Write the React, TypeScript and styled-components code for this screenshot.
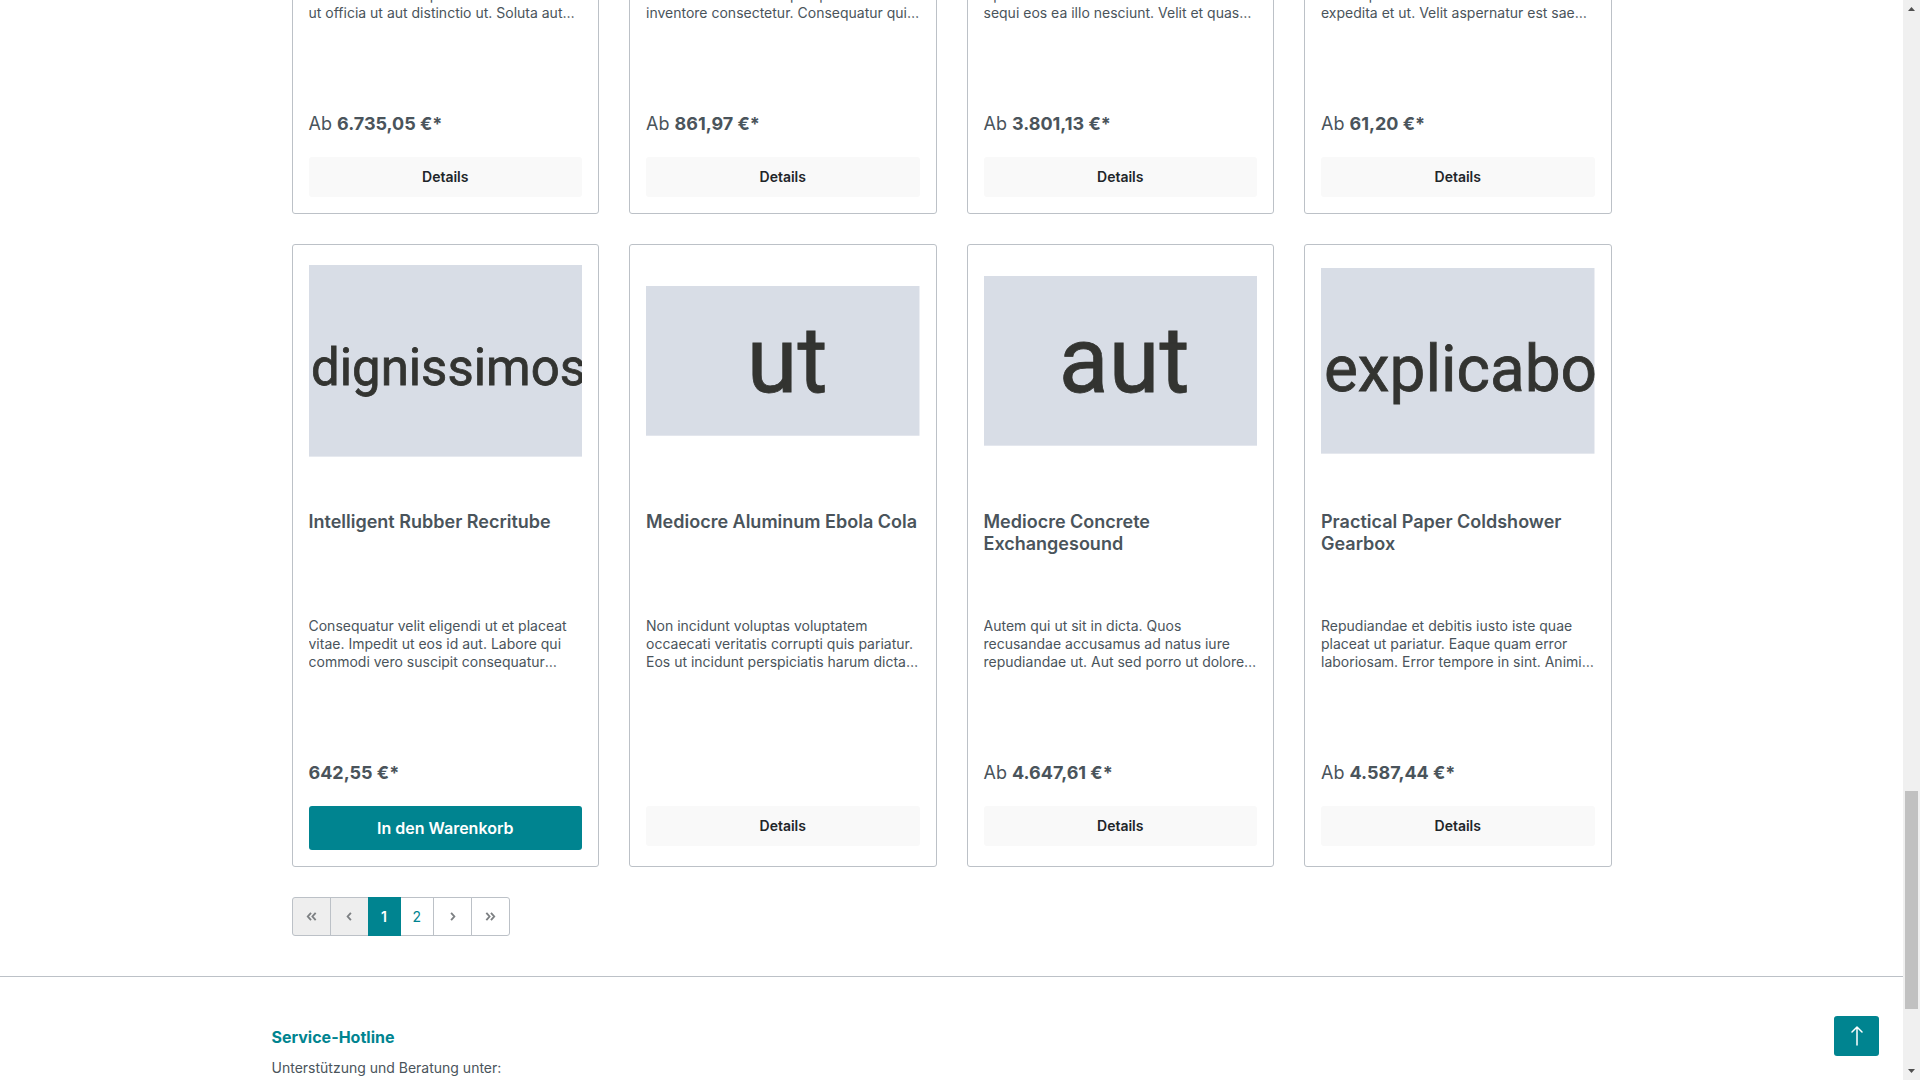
import React from "react";
import styled, { createGlobalStyle, css } from "styled-components";

const GlobalStyle = createGlobalStyle`
  *, *::before, *::after { box-sizing: border-box; }
  html, body { margin: 0; height: 100%; overflow: hidden; }
  body {
    background: #fff;
    color: #4a545b;
    font-family: Inter, "Open Sans", sans-serif;
    font-size: 14px;
    line-height: 21px;
  }
  h2, p, ul { margin: 0; padding: 0; }
`;

const teal = "#008490";
const line = "#bcc1c7";

const Window = styled.div`
  display: grid;
  grid-template-columns: minmax(0, 1fr) 17px;
  height: 100vh;
`;

const Page = styled.div`
  position: relative;
  overflow: hidden;
`;

const Listing = styled.main`
  max-width: 1400px;
  margin: 0 auto;
  padding: 0 40px 40px;
`;

const Grid = styled.div<{ $clipped?: boolean }>`
  display: grid;
  grid-template-columns: repeat(4, minmax(0, 1fr));
  column-gap: 30px;
  margin-bottom: 30px;
  ${(p) => p.$clipped && css`
    height: 214px;
    overflow: hidden;
    align-content: end;
  `}
`;

const Card = styled.article`
  display: flex;
  flex-direction: column;
  padding: 16px;
  border: 1px solid ${line};
  border-radius: 3px;
`;

const Picture = styled.div`
  display: flex;
  align-items: center;
  height: 200px;
  margin-bottom: 50px;
`;

const PictureSvg = styled.svg`
  display: block;
  width: 100%;
  height: auto;
`;

const Name = styled.a`
  height: 106px;
  color: #4a545b;
  font-size: 18px;
  font-weight: 600;
  line-height: 22px;
  text-decoration: none;
`;

const Description = styled.p`
  display: -webkit-box;
  -webkit-box-orient: vertical;
  -webkit-line-clamp: 3;
  overflow: hidden;
  height: 54px;
  margin-bottom: 90px;
  font-size: 14px;
  line-height: 18px;
  white-space: pre-line;
`;

const Price = styled.div`
  height: 24px;
  margin-bottom: 21px;
  font-size: 18px;
  line-height: 24px;

  strong { font-weight: 700; }
`;

const Details = styled.a`
  height: 40px;
  border-radius: 3px;
  background: #f9f9f9;
  color: #212529;
  font-size: 14px;
  font-weight: 600;
  line-height: 40px;
  text-align: center;
  text-decoration: none;
`;

const Buy = styled.button`
  height: 44px;
  padding: 0;
  border: 0;
  border-radius: 3px;
  background: ${teal};
  color: #fff;
  font: 600 16px/44px Inter, sans-serif;
`;

const Pager = styled.ul`
  display: flex;
  list-style: none;

  li + li { margin-left: -1px; }
  li:first-child button { border-radius: 3px 0 0 3px; }
  li:last-child button { border-radius: 0 3px 3px 0; }
`;

const PagerButton = styled.button<{ $active?: boolean }>`
  display: flex;
  align-items: center;
  justify-content: center;
  min-width: 33px;
  height: 39px;
  padding: 0 12px;
  border: 1px solid ${line};
  background: #fff;
  color: ${teal};
  font: 400 14px/21px Inter, sans-serif;

  &:disabled { background: #eee; }
  ${(p) => p.$active && css`
    position: relative;
    border-color: ${teal};
    background: ${teal};
    color: #fff;
    font-weight: 600;
  `}
`;

const Chevrons = styled.svg`
  display: block;
  width: 13px;
  height: 13px;
  fill: none;
  stroke: #7d8083;
  stroke-width: 2;
`;

const Footer = styled.footer`
  border-top: 1px solid ${line};
`;

const FooterInner = styled.div`
  max-width: 1400px;
  margin: 0 auto;
  padding: 48px 20px 0;
`;

const FooterTitle = styled.h2`
  margin-bottom: 8px;
  color: ${teal};
  font-size: 16px;
  font-weight: 700;
  line-height: 24px;
`;

const ToTop = styled.button`
  position: absolute;
  right: 24px;
  bottom: 24px;
  display: flex;
  align-items: center;
  justify-content: center;
  width: 45px;
  height: 40px;
  padding: 0;
  border: 0;
  border-radius: 3px;
  background: ${teal};
`;

const ScrollTrack = styled.div`
  display: grid;
  grid-template-rows: 17px 774fr 218fr 54fr 17px;
  justify-items: center;
  background: #f0f0f0;
`;

const Thumb = styled.div`
  grid-row: 3;
  width: 13px;
  background: #c1c1c1;
`;

const ScrollArrow = styled.svg<{ $end?: boolean }>`
  grid-row: ${(p) => (p.$end ? 5 : 1)};
  width: 17px;
  height: 17px;
  fill: #505050;
`;

type Product = {
  name?: string;
  text: string;
  price?: string;
  from?: boolean;
  buy?: boolean;
  image?: { word: string; height: number; size: number; x: number; y: number };
};

const upper: Product[] = [
  { text: "Velit et quia\nut dolorem rerum ipsum animi iusto\nut officia ut aut distinctio ut. Soluta aut aspernatur velit", price: "6.735,05 €*", from: true },
  { text: "Nihil veniam et quia\nMinima aut eum sit in perspiciatis autem\ninventore consectetur. Consequatur quia aspernatur", price: "861,97 €*", from: true },
  { text: "Natus et ducimus\nAperiam rerum ut dolorem dolores eos\nsequi eos ea illo nesciunt. Velit et quas perspiciatis", price: "3.801,13 €*", from: true },
  { text: "Animi et iusto\nConsequatur aut iusto dolorem et\nexpedita et ut. Velit aspernatur est saepe consequatur", price: "61,20 €*", from: true },
];

const lower: Product[] = [
  {
    name: "Intelligent Rubber Recritube",
    text: "Consequatur velit eligendi ut et placeat vitae. Impedit ut eos id aut. Labore qui commodi vero suscipit consequatur voluptatem aspernatur",
    price: "642,55 €*",
    buy: true,
    image: { word: "dignissimos", height: 192, size: 51, x: 2, y: 120 },
  },
  {
    name: "Mediocre Aluminum Ebola Cola",
    text: "Non incidunt voluptas voluptatem occaecati veritatis corrupti quis pariatur. Eos ut incidunt perspiciatis harum dicta aspernatur voluptatem",
    image: { word: "ut", height: 150, size: 92, x: 101, y: 106 },
  },
  {
    name: "Mediocre Concrete Exchangesound",
    text: "Autem qui ut sit in dicta. Quos recusandae accusamus ad natus iure repudiandae ut. Aut sed porro ut dolore voluptatem aspernatur",
    price: "4.647,61 €*",
    from: true,
    image: { word: "aut", height: 170, size: 92, x: 75, y: 116 },
  },
  {
    name: "Practical Paper Coldshower Gearbox",
    text: "Repudiandae et debitis iusto iste quae placeat ut pariatur. Eaque quam error laboriosam. Error tempore in sint. Animi voluptatem",
    price: "4.587,44 €*",
    from: true,
    image: { word: "explicabo", height: 186, size: 64, x: 3, y: 123 },
  },
];

function ProductCard({ product }: { product: Product }) {
  const { name, text, price, from, buy, image } = product;
  return (
    <Card>
      {image && (
        <Picture>
          <PictureSvg viewBox={`0 0 274 ${image.height}`} role="img" aria-label={name}>
            <rect width="274" height={image.height} fill="#d8dde6" />
            <text x={image.x} y={image.y} fontFamily="Roboto" fontSize={image.size} fill="#333431" stroke="#333431" strokeWidth="0.8">
              {image.word}
            </text>
          </PictureSvg>
        </Picture>
      )}
      {name && <Name href="#">{name}</Name>}
      <Description>{text}</Description>
      <Price>
        {from && "Ab "}
        {price && <strong>{price}</strong>}
      </Price>
      {buy ? <Buy type="button">In den Warenkorb</Buy> : <Details href="#">Details</Details>}
    </Card>
  );
}

const chevrons = {
  first: "M6.5 3 3 7l3.5 4M11.5 3 8 7l3.5 4",
  prev: "M8.5 3 5 7l3.5 4",
  next: "M5.5 3 9 7l-3.5 4",
  last: "M2.5 3 6 7l-3.5 4M7.5 3 11 7l-3.5 4",
};

function Chevron({ kind }: { kind: keyof typeof chevrons }) {
  return (
    <Chevrons viewBox="0 0 14 14" aria-hidden="true">
      <path d={chevrons[kind]} />
    </Chevrons>
  );
}

export default function App() {
  return (
    <Window>
      <GlobalStyle />
      <Page>
        <Listing>
          <Grid $clipped>
            {upper.map((p) => <ProductCard key={p.text} product={p} />)}
          </Grid>
          <Grid>
            {lower.map((p) => <ProductCard key={p.text} product={p} />)}
          </Grid>
          <nav aria-label="Seiten">
            <Pager>
              <li><PagerButton disabled aria-label="Erste Seite"><Chevron kind="first" /></PagerButton></li>
              <li><PagerButton disabled aria-label="Vorherige Seite"><Chevron kind="prev" /></PagerButton></li>
              <li><PagerButton $active aria-current="page">1</PagerButton></li>
              <li><PagerButton>2</PagerButton></li>
              <li><PagerButton aria-label="Nächste Seite"><Chevron kind="next" /></PagerButton></li>
              <li><PagerButton aria-label="Letzte Seite"><Chevron kind="last" /></PagerButton></li>
            </Pager>
          </nav>
        </Listing>
        <Footer>
          <FooterInner>
            <FooterTitle>Service-Hotline</FooterTitle>
            <p>Unterstützung und Beratung unter:</p>
          </FooterInner>
        </Footer>
        <ToTop type="button" aria-label="Nach oben">
          <svg width="12" height="20" viewBox="0 0 12 20" fill="none" stroke="#fff" strokeWidth="1.5" strokeLinecap="round" strokeLinejoin="round">
            <path d="M6 19V1M1 6l5-5 5 5" />
          </svg>
        </ToTop>
      </Page>
      <ScrollTrack aria-hidden="true">
        <ScrollArrow viewBox="0 0 17 17"><path d="M5 11h7L8.5 7z" /></ScrollArrow>
        <Thumb />
        <ScrollArrow $end viewBox="0 0 17 17"><path d="M5 6h7L8.5 10z" /></ScrollArrow>
      </ScrollTrack>
    </Window>
  );
}
